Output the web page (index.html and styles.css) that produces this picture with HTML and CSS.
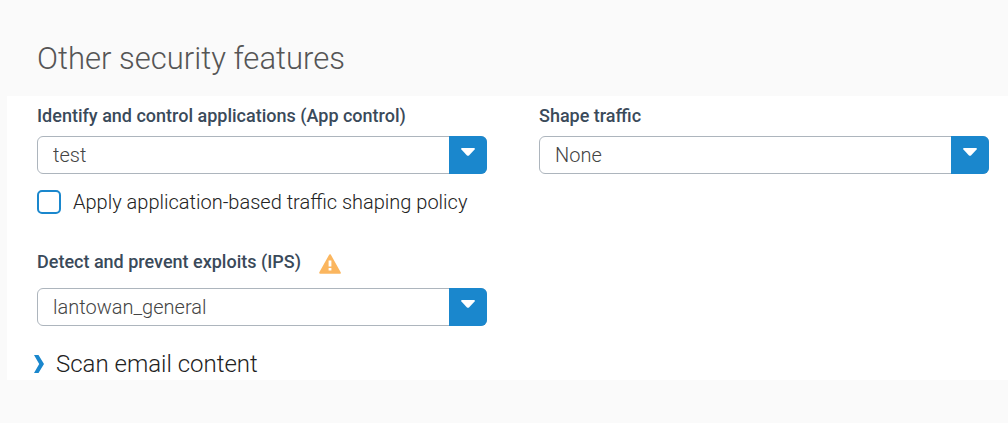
FILE: index.html
```html
<!DOCTYPE html>
<html lang="en">
<head>
  <meta charset="UTF-8">
  <meta name="viewport" content="width=device-width, initial-scale=1.0">
  <title>Other security features</title>
  <link rel="stylesheet" href="styles.css">
</head>
<body>
  <h2 class="section-title">Other security features</h2>

  <form class="panel">
    <div class="columns">
      <div class="column">
        <div class="field">
          <label class="field-label" for="appControl">Identify and control applications (App control)</label>
          <div class="dropdown">
            <select id="appControl">
              <option>test</option>
            </select>
            <span class="dropdown-arrow">
              <svg width="14" height="8" viewBox="0 0 14 8"><path d="M1 0h12q1.4.3.6 1.4L8 7.4q-1 .9-2 0L.4 1.4Q-.4.3 1 0z" fill="#fff"/></svg>
            </span>
          </div>
        </div>

        <div class="check">
          <input type="checkbox" id="appShaping">
          <label for="appShaping">Apply application-based traffic shaping policy</label>
        </div>

        <div class="field">
          <div class="label-row">
            <label class="field-label" for="ips">Detect and prevent exploits (IPS)</label>
            <svg class="warning" width="22" height="20" viewBox="0 0 22 20">
              <path d="M11 1.2 20.8 18.8H1.2z" fill="#fbb65f" stroke="#fbb65f" stroke-width="2" stroke-linejoin="round"/>
              <path d="M9.6 6.5h2.8v6H9.6zM9.6 14h2.8v2.6H9.6z" fill="#fff"/>
            </svg>
          </div>
          <div class="dropdown">
            <select id="ips">
              <option>lantowan_general</option>
            </select>
            <span class="dropdown-arrow">
              <svg width="14" height="8" viewBox="0 0 14 8"><path d="M1 0h12q1.4.3.6 1.4L8 7.4q-1 .9-2 0L.4 1.4Q-.4.3 1 0z" fill="#fff"/></svg>
            </span>
          </div>
        </div>
      </div>

      <div class="column">
        <div class="field">
          <label class="field-label" for="shapeTraffic">Shape traffic</label>
          <div class="dropdown">
            <select id="shapeTraffic">
              <option>None</option>
            </select>
            <span class="dropdown-arrow">
              <svg width="14" height="8" viewBox="0 0 14 8"><path d="M1 0h12q1.4.3.6 1.4L8 7.4q-1 .9-2 0L.4 1.4Q-.4.3 1 0z" fill="#fff"/></svg>
            </span>
          </div>
        </div>
      </div>
    </div>

    <button type="button" class="expander" aria-expanded="false">
      <svg width="10" height="18" viewBox="0 0 10 18"><path d="M0 0h4.5l5.5 9-5.5 9H0l5.2-9z" fill="#1a87cd"/></svg>
      Scan email content
    </button>
  </form>
</body>
</html>
```
FILE: styles.css
```css
* {
  box-sizing: border-box;
}

body {
  margin: 0;
  background: #fafafa;
  color: #222;
  font-family: Roboto, "Liberation Sans", sans-serif;
  font-size: 20px;
  font-weight: 300;
}

.section-title {
  margin: 0;
  padding: 39px 37px 17px;
  font-size: 31px;
  line-height: 40px;
  font-weight: 300;
  color: #555;
}

.panel {
  margin-left: 7px;
  padding: 8px 19px 0 30px;
  background: #fff;
}

.columns {
  display: grid;
  grid-template-columns: 1fr 1fr;
  gap: 52px;
}

.field-label {
  display: block;
  margin-bottom: 8px;
  font-size: 18px;
  line-height: 24px;
  font-weight: 500;
  color: #3a4a5a;
}

.label-row {
  display: flex;
  gap: 18px;
  margin-bottom: 6px;
}

.warning {
  margin-top: 4px;
}

/* Dropdowns */
.dropdown {
  position: relative;
}

.dropdown select {
  display: block;
  width: 100%;
  height: 38px;
  padding: 0 54px 0 15px;
  appearance: none;
  border: 1px solid #adb5bd;
  border-radius: 6px;
  background: #fff;
  color: #444;
  font: inherit;
}

.dropdown-arrow {
  position: absolute;
  top: 0;
  right: 0;
  bottom: 0;
  width: 38px;
  padding-top: 12px;
  border-radius: 0 6px 6px 0;
  background: #1a87cd;
  line-height: 0;
  text-align: center;
  pointer-events: none;
}

/* Checkbox row */
.check {
  display: flex;
  align-items: center;
  gap: 12px;
  margin: 16px 0 36px;
  line-height: 24px;
}

.check input {
  width: 24px;
  height: 24px;
  margin: 0;
  appearance: none;
  border: 2px solid #1a87cd;
  border-radius: 5px;
  background: #fff;
}

.check input:checked {
  background: #1a87cd;
}

.expander {
  display: flex;
  align-items: center;
  gap: 12px;
  margin: 22px 0 0 -3px;
  padding: 0;
  border: 0;
  background: none;
  color: #222;
  font: inherit;
  font-size: 24px;
  line-height: 32px;
}
```
